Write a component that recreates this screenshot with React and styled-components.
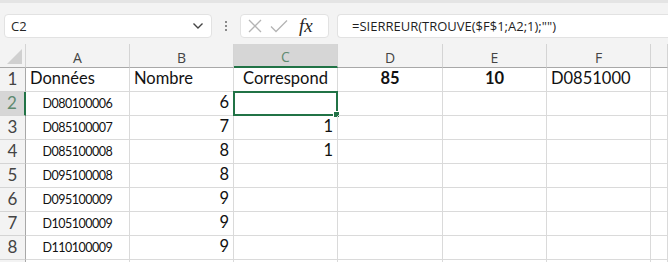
import React from "react";
import styled, { createGlobalStyle } from "styled-components";

const Global = createGlobalStyle`
  html, body { margin: 0; padding: 0; background: #ffffff; }
  body { font-family: Lato, "Open Sans", sans-serif; overflow: hidden; }
`;

const Page = styled.div`
  width: 668px;
  height: 262px;
  overflow: hidden;
  background: #ffffff;
`;

const TopBar = styled.div`
  height: 44px;
  box-sizing: border-box;
  background: #f3f3f3;
  border-top: 3px solid #e4e4e4;
  display: flex;
  align-items: center;
  padding: 0 0 0 4px;
`;

const NameBox = styled.div`
  width: 208px;
  height: 24px;
  box-sizing: border-box;
  background: #ffffff;
  border: 1px solid #e2e2e2;
  border-radius: 4px;
  display: flex;
  align-items: center;
  justify-content: space-between;
  padding: 0 7px 0 6px;
  font-family: "Open Sans", sans-serif;
  font-size: 13px;
  color: #262626;
  margin-top: 4px;
`;

const Dots = styled.div`
  width: 28px;
  display: flex;
  flex-direction: column;
  align-items: center;
  gap: 2px;
  margin-top: 4px;
  span {
    width: 2px;
    height: 2px;
    background: #8a8a8a;
  }
`;

const FxBox = styled.div`
  width: 89px;
  height: 24px;
  box-sizing: border-box;
  background: #ffffff;
  border: 1px solid #e2e2e2;
  border-radius: 4px;
  display: flex;
  align-items: center;
  padding: 0 4px 0 6px;
  gap: 6px;
  margin-top: 4px;
`;

const FxLabel = styled.span`
  font-family: "Liberation Serif", "DejaVu Serif", serif;
  font-style: italic;
  font-size: 19px;
  color: #262626;
  margin-left: 4px;
  line-height: 1;
`;

const FormulaInput = styled.div`
  flex: 1;
  height: 24px;
  margin-left: 8px;
  margin-top: 4px;
  box-sizing: border-box;
  background: #ffffff;
  border: 1px solid #e2e2e2;
  border-right: none;
  border-radius: 4px 0 0 4px;
  display: flex;
  align-items: center;
  padding-left: 14px;
  font-family: "Open Sans", sans-serif;
  font-size: 13px;
  color: #1f1f1f;
`;

const Grid = styled.div`
  display: grid;
  grid-template-columns: 26px 104px 104px 104px 105px 104px 104px 1fr;
  grid-auto-rows: 24px;
`;

const Corner = styled.div`
  background: #f3f3f3;
  border-right: 1px solid #d4d4d4;
  border-bottom: 1px solid #a8a8a8;
  box-sizing: border-box;
  position: relative;
  &::after {
    content: "";
    position: absolute;
    right: 3px;
    bottom: 3px;
    width: 0;
    height: 0;
    border-left: 15px solid transparent;
    border-bottom: 15px solid #d0d0d0;
  }
`;

const ColHead = styled.div`
  box-sizing: border-box;
  background: ${(p) => (p.$selected ? "#d6d6d6" : "#f3f3f3")};
  border-right: 1px solid #d4d4d4;
  border-bottom: ${(p) => (p.$selected ? "2px solid #217346" : "1px solid #a8a8a8")};
  display: flex;
  align-items: center;
  justify-content: center;
  padding-top: 3px;
  font-family: "Open Sans", sans-serif;
  font-size: 14px;
  color: ${(p) => (p.$selected ? "#5e8a70" : "#444444")};
`;

const RowHead = styled.div`
  box-sizing: border-box;
  background: ${(p) => (p.$selected ? "#d6d6d6" : "#f3f3f3")};
  border-right: ${(p) => (p.$selected ? "2px solid #217346" : "1px solid #a8a8a8")};
  border-bottom: 1px solid #d4d4d4;
  display: flex;
  align-items: flex-end;
  justify-content: center;
  padding-bottom: 2px;
  font-family: Lato, sans-serif;
  font-size: 17px;
  color: ${(p) => (p.$selected ? "#5e8a70" : "#444444")};
`;

const Cell = styled.div`
  position: relative;
  box-sizing: border-box;
  border-right: 1px solid #dadada;
  border-bottom: 1px solid #dadada;
  display: flex;
  align-items: flex-end;
  justify-content: ${(p) =>
    p.$align === "right" ? "flex-end" : p.$align === "center" ? "center" : "flex-start"};
  padding: 0 4px 3px 4px;
  font-family: Lato, sans-serif;
  font-size: ${(p) => (p.$small ? "12.5px" : "16.5px")};
  letter-spacing: ${(p) => (p.$small ? "-0.5px" : "0")};
  padding-bottom: ${(p) => (p.$small ? "4px" : "3px")};
  font-weight: ${(p) => (p.$bold ? 700 : 400)};
  color: #111111;
  white-space: nowrap;
`;

const Selection = styled.div`
  position: absolute;
  left: -1px;
  top: -1px;
  right: -1px;
  bottom: -1px;
  border: 2px solid #217346;
  pointer-events: none;
  &::after {
    content: "";
    position: absolute;
    right: -4px;
    bottom: -4px;
    width: 5px;
    height: 5px;
    background: #217346;
    border: 1px solid #ffffff;
  }
`;

const Chevron = () => (
  <svg width="12" height="8" viewBox="0 0 12 8">
    <path d="M1.5 1.5 L6 6 L10.5 1.5" fill="none" stroke="#444" strokeWidth="1.4" />
  </svg>
);

const CrossIcon = () => (
  <svg width="16" height="16" viewBox="0 0 16 16">
    <path d="M2 2 L14 14 M14 2 L2 14" fill="none" stroke="#b4b4b4" strokeWidth="1.3" />
  </svg>
);

const CheckIcon = () => (
  <svg width="20" height="16" viewBox="0 0 20 16">
    <path d="M2 8.5 L7 13.5 L18 2.5" fill="none" stroke="#b4b4b4" strokeWidth="1.3" />
  </svg>
);

const columns = ["A", "B", "C", "D", "E", "F", ""];

const rows = [
  [
    { v: "Données" },
    { v: "Nombre" },
    { v: "Correspond", a: "center" },
    { v: "85", a: "center", b: true },
    { v: "10", a: "center", b: true },
    { v: "D0851000" },
    { v: "" },
  ],
  [{ v: "D080100006", a: "center", s: true }, { v: "6", a: "right" }, { v: "", sel: true }],
  [{ v: "D085100007", a: "center", s: true }, { v: "7", a: "right" }, { v: "1", a: "right" }],
  [{ v: "D085100008", a: "center", s: true }, { v: "8", a: "right" }, { v: "1", a: "right" }],
  [{ v: "D095100008", a: "center", s: true }, { v: "8", a: "right" }],
  [{ v: "D095100009", a: "center", s: true }, { v: "9", a: "right" }],
  [{ v: "D105100009", a: "center", s: true }, { v: "9", a: "right" }],
  [{ v: "D110100009", a: "center", s: true }, { v: "9", a: "right" }],
];

export default function App() {
  return (
    <Page>
      <Global />
      <TopBar>
        <NameBox>
          <span>C2</span>
          <Chevron />
        </NameBox>
        <Dots>
          <span />
          <span />
          <span />
        </Dots>
        <FxBox>
          <CrossIcon />
          <CheckIcon />
          <FxLabel>fx</FxLabel>
        </FxBox>
        <FormulaInput>=SIERREUR(TROUVE($F$1;A2;1);"")</FormulaInput>
      </TopBar>
      <Grid>
        <Corner />
        {columns.map((c, i) => (
          <ColHead key={i} $selected={c === "C"}>
            {c}
          </ColHead>
        ))}
        {rows.map((r, ri) => (
          <React.Fragment key={ri}>
            <RowHead $selected={ri === 1}>{ri + 1}</RowHead>
            {columns.map((_, ci) => {
              const cell = r[ci] || { v: "" };
              return (
                <Cell key={ci} $align={cell.a} $bold={cell.b} $small={cell.s}>
                  {cell.v}
                  {cell.sel && <Selection />}
                </Cell>
              );
            })}
          </React.Fragment>
        ))}
        <RowHead />
        {columns.map((_, ci) => (
          <Cell key={"last" + ci} />
        ))}
      </Grid>
    </Page>
  );
}
